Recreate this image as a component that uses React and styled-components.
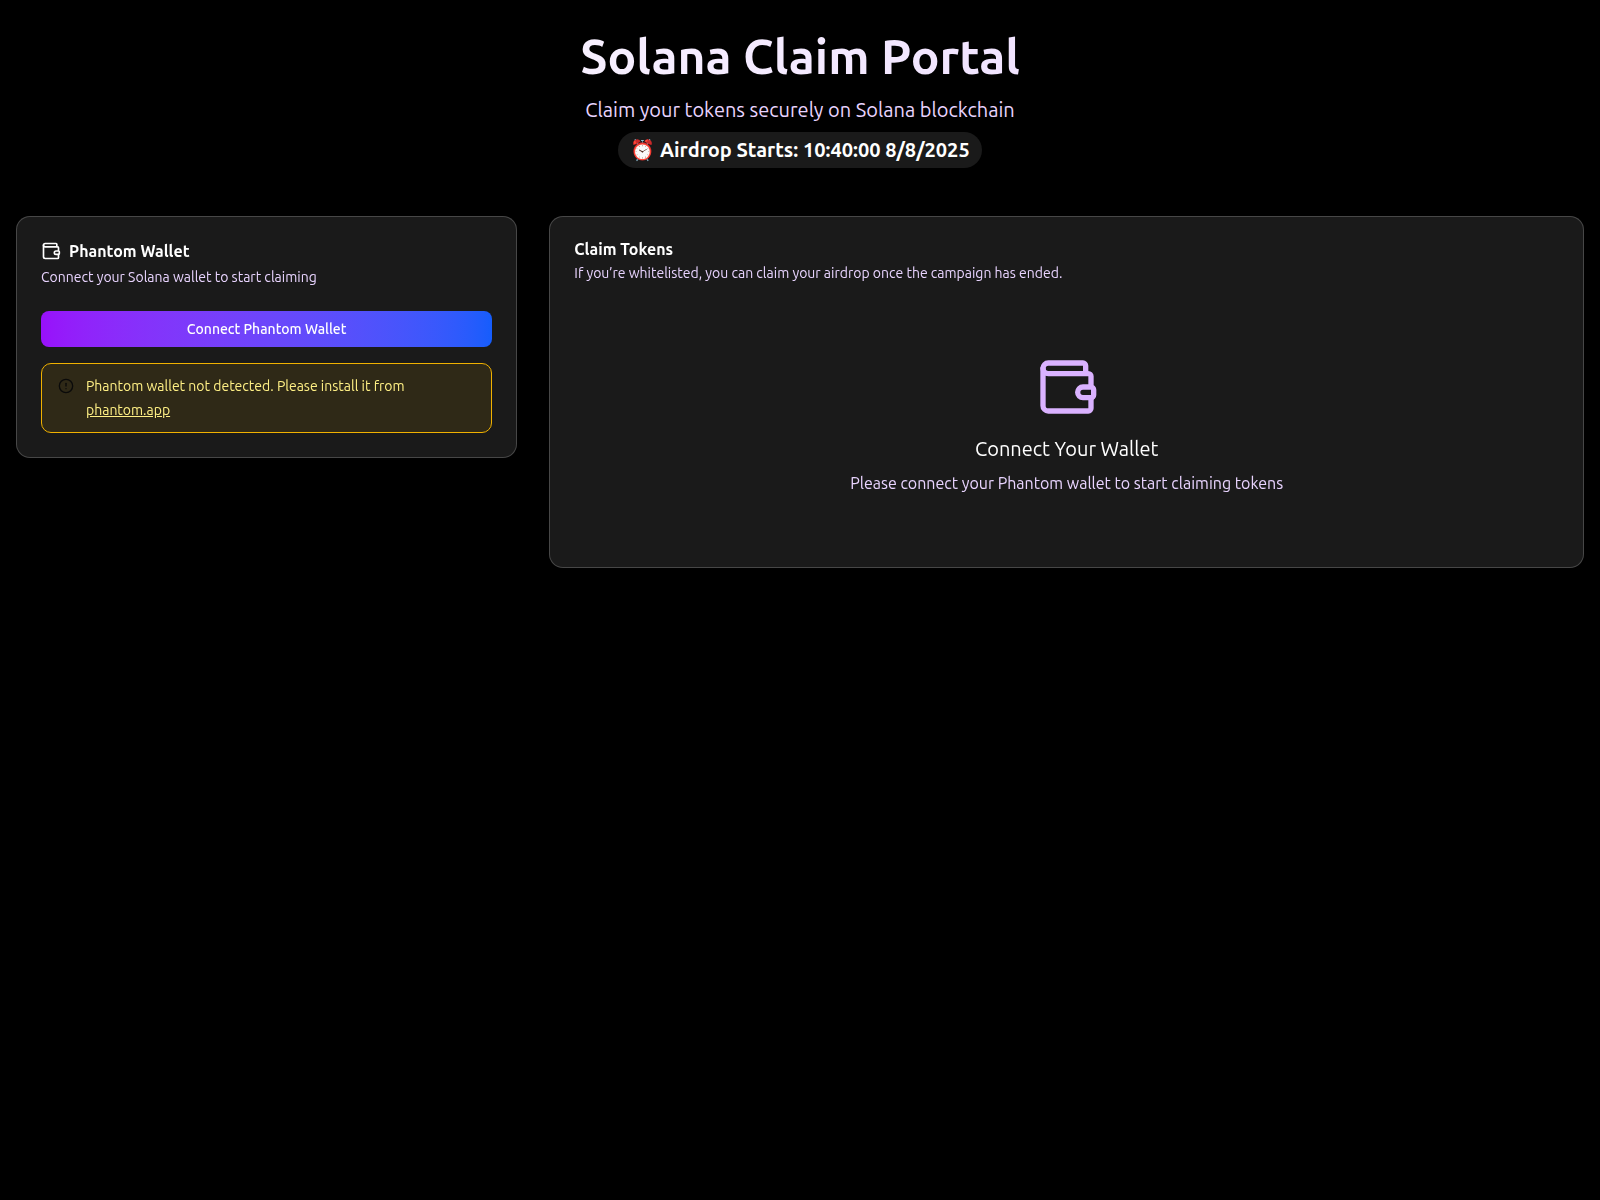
import React from "react";
import styled, { createGlobalStyle } from "styled-components";
import { Wallet, CircleAlert } from "lucide-react";

const GlobalStyle = createGlobalStyle`
  *, *::before, *::after { box-sizing: border-box; }
  body {
    margin: 0;
    background: #000;
    color: #fff;
    font-family: Ubuntu, "Noto Sans", "Noto Color Emoji", sans-serif;
    font-size: 16px;
    line-height: 24px;
  }
  h1, h2, h3, p { margin: 0; }
`;

const Page = styled.main`
  min-height: 100vh;
  padding: 32px 16px;
`;

const Header = styled.header`
  display: flex;
  flex-direction: column;
  align-items: center;
  margin-bottom: 48px;
  text-align: center;
`;

const PageTitle = styled.h1`
  align-self: stretch;
  margin-bottom: 16px;
  font-size: 48px;
  font-weight: 600;
  line-height: 48px;
  color: transparent;
  background: linear-gradient(to right in oklab, #ffffff, #e9d4ff);
  background-clip: text;
`;

const Tagline = styled.p`
  margin-bottom: 8px;
  font-size: 20px;
  line-height: 28px;
  color: #e9d4ff;
`;

const StartBadge = styled.p`
  padding: 4px 12px;
  border-radius: 18px;
  background: #1a1a1a;
  font-size: 20px;
  font-weight: 600;
  line-height: 28px;
`;

const Columns = styled.div`
  display: grid;
  grid-template-columns: repeat(3, minmax(0, 1fr));
  column-gap: 32px;
  align-items: start;

  @media (max-width: 900px) {
    grid-template-columns: minmax(0, 1fr);
    row-gap: 32px;
  }
`;

const Card = styled.section`
  display: flex;
  flex-direction: column;
  gap: 24px;
  padding: 24px;
  border: 1px solid rgba(255, 255, 255, 0.2);
  border-radius: 14px;
  background: rgba(255, 255, 255, 0.1);
  backdrop-filter: blur(16px);
  grid-column: ${({ $wide }) => ($wide ? "span 2" : "auto")};

  @media (max-width: 900px) {
    grid-column: auto;
  }
`;

const CardHeader = styled.div`
  display: flex;
  flex-direction: column;
  gap: 6px;
`;

const CardTitle = styled.h2`
  display: flex;
  align-items: center;
  gap: 8px;
  font-size: 16px;
  font-weight: 600;
  line-height: 16px;
`;

const CardDescription = styled.p`
  font-size: 14px;
  line-height: 20px;
  color: #e9d4ff;
`;

const CardBody = styled.div`
  display: flex;
  flex-direction: column;
  gap: 16px;
`;

const ConnectButton = styled.button`
  height: 36px;
  border: 0;
  border-radius: 8px;
  background: linear-gradient(to right in oklab, #9810fa, #155dfc);
  color: #fff;
  font: inherit;
  font-size: 14px;
  font-weight: 500;
  line-height: 20px;
  cursor: pointer;
`;

const Alert = styled.div`
  display: flex;
  gap: 12px;
  padding: 10px 16px;
  border: 1px solid #f0b100;
  border-radius: 10px;
  background: rgba(240, 177, 0, 0.1);
`;

const AlertIcon = styled(CircleAlert)`
  flex: none;
  margin-top: 4px;
  color: #0a0a0a;
`;

const AlertText = styled.p`
  font-size: 14px;
  line-height: 24px;
  color: #fff085;
`;

const AlertLink = styled.a`
  display: block;
  width: fit-content;
  color: inherit;
  text-decoration: underline;
`;

const EmptyState = styled.div`
  display: flex;
  flex-direction: column;
  align-items: center;
  padding: 48px 0;
  text-align: center;
`;

const EmptyTitle = styled.h3`
  margin: 16px 0 8px;
  font-size: 20px;
  font-weight: 400;
  line-height: 28px;
`;

const EmptyText = styled.p`
  color: #e9d4ff;
`;

export default function App() {
  return (
    <>
      <GlobalStyle />
      <Page>
        <Header>
          <PageTitle>Solana Claim Portal</PageTitle>
          <Tagline>Claim your tokens securely on Solana blockchain</Tagline>
          <StartBadge>⏰ Airdrop Starts: 10:40:00 8/8/2025</StartBadge>
        </Header>
        <Columns>
          <Card>
            <CardHeader>
              <CardTitle>
                <Wallet size={20} aria-hidden="true" />
                Phantom Wallet
              </CardTitle>
              <CardDescription>Connect your Solana wallet to start claiming</CardDescription>
            </CardHeader>
            <CardBody>
              <ConnectButton type="button">Connect Phantom Wallet</ConnectButton>
              <Alert role="alert">
                <AlertIcon size={16} aria-hidden="true" />
                <AlertText>
                  Phantom wallet not detected. Please install it from{" "}
                  <AlertLink href="https://phantom.app">phantom.app</AlertLink>
                </AlertText>
              </Alert>
            </CardBody>
          </Card>
          <Card $wide>
            <CardHeader>
              <CardTitle>Claim Tokens</CardTitle>
              <CardDescription>
                If you’re whitelisted, you can claim your airdrop once the campaign has ended.
              </CardDescription>
            </CardHeader>
            <EmptyState>
              <Wallet size={64} color="#dab2ff" aria-hidden="true" />
              <EmptyTitle>Connect Your Wallet</EmptyTitle>
              <EmptyText>Please connect your Phantom wallet to start claiming tokens</EmptyText>
            </EmptyState>
          </Card>
        </Columns>
      </Page>
    </>
  );
}
